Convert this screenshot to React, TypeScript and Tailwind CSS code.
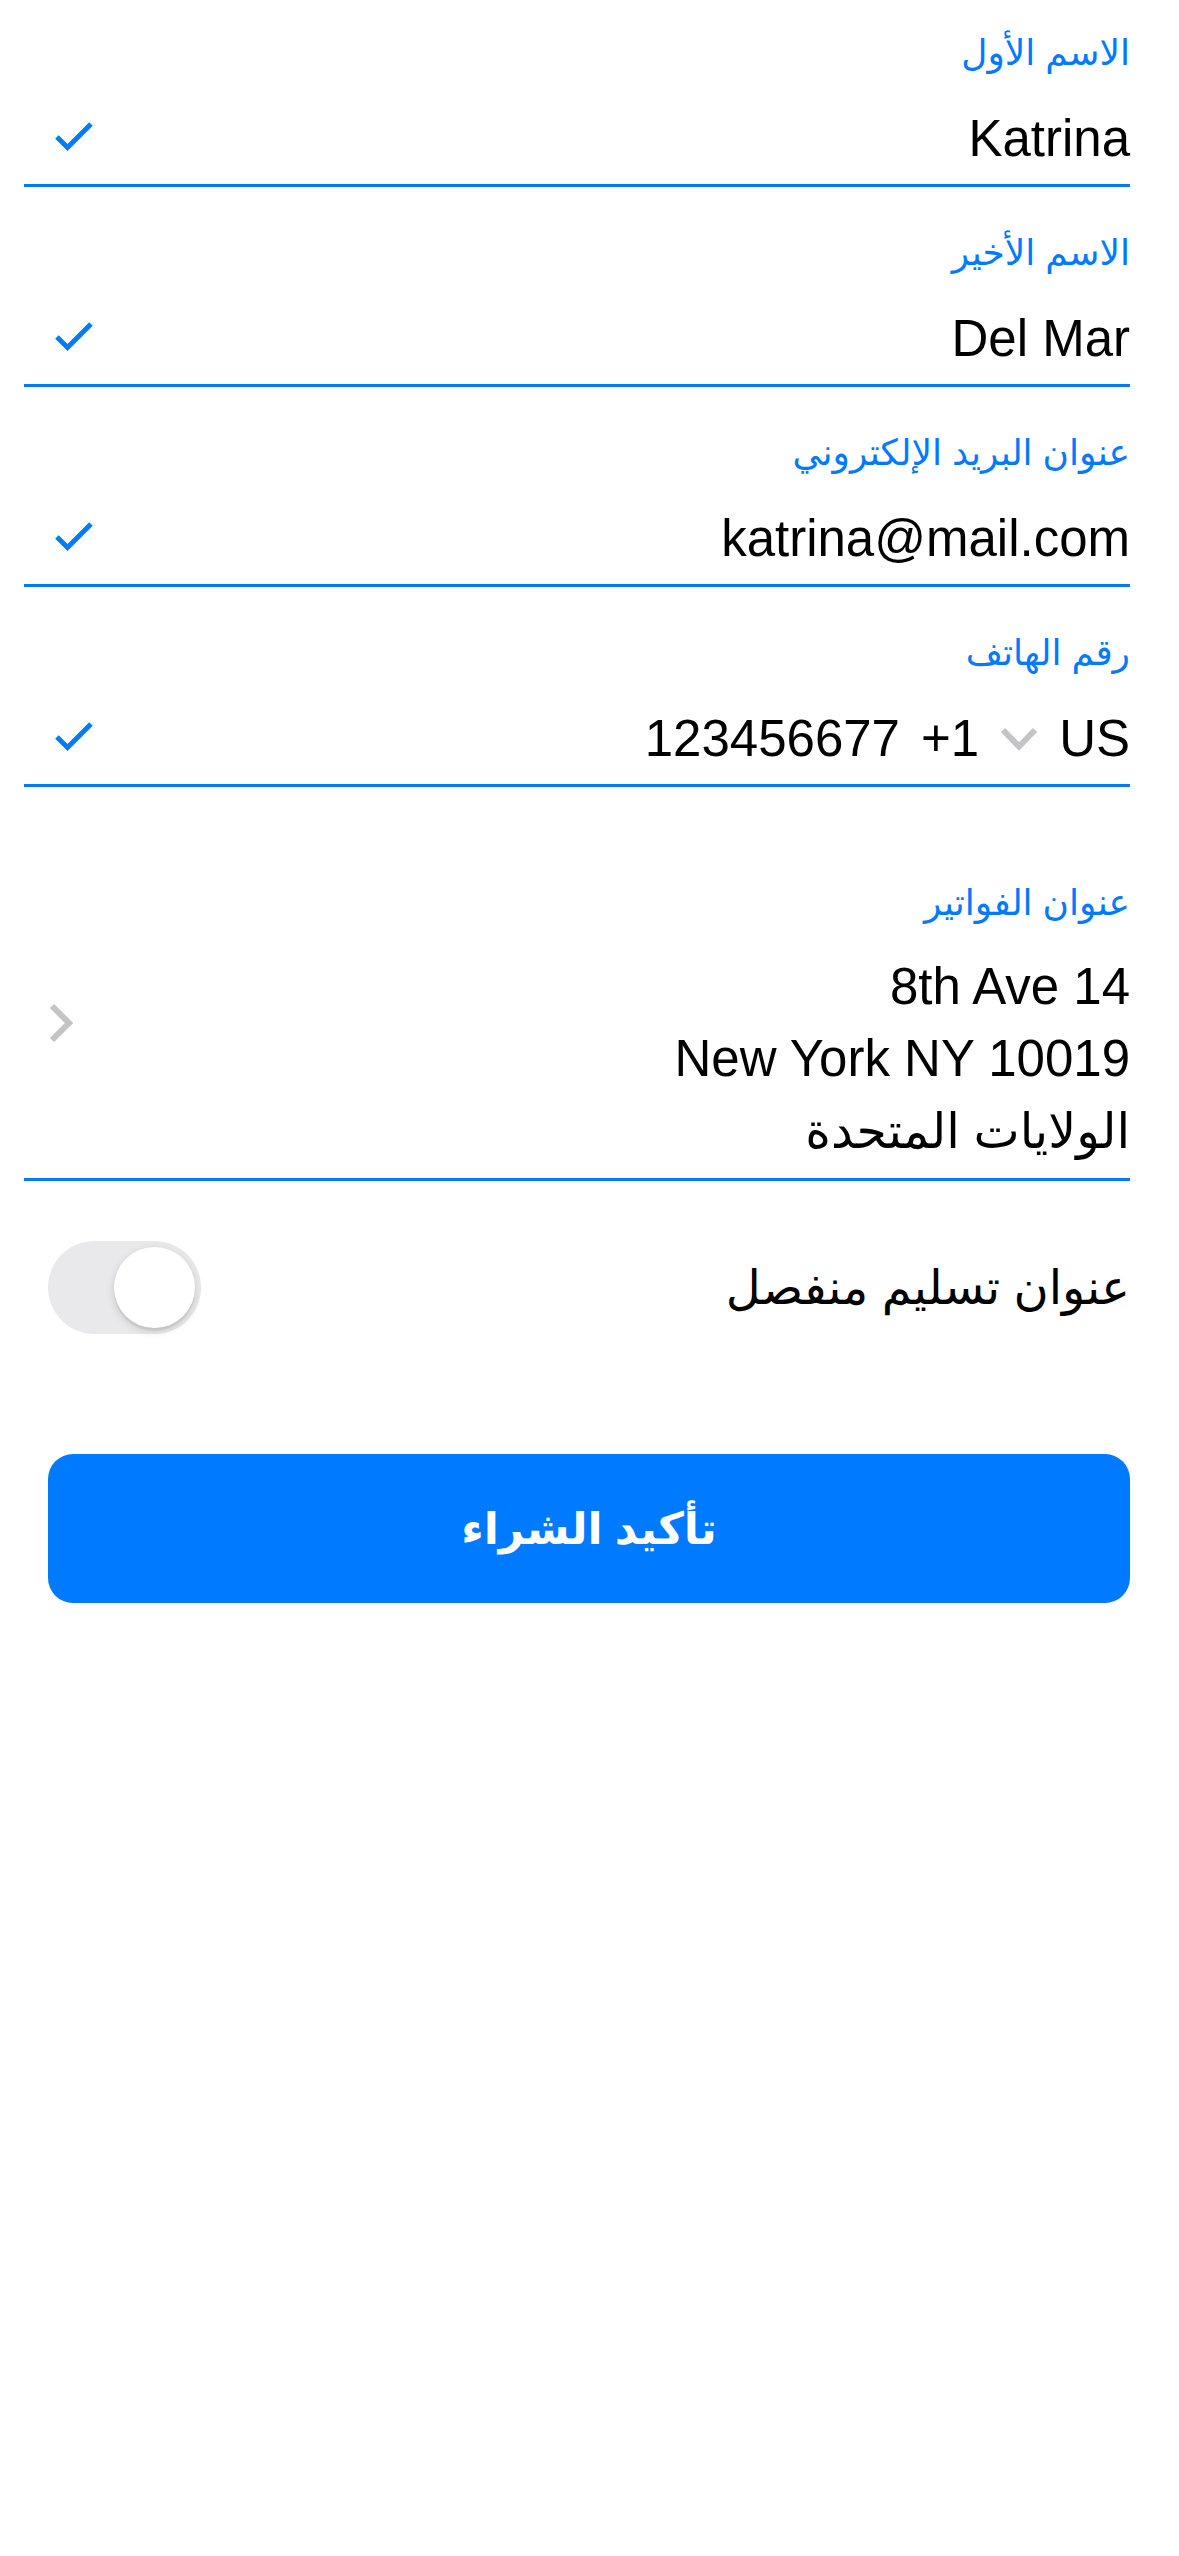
import React from 'react'

function Check() {
  return (
    <svg width="40" height="32" viewBox="0 0 40 32" fill="none">
      <path d="M3 16 L13.5 26.5 L37 3" stroke="#007aff" strokeWidth="5" />
    </svg>
  )
}

function ChevronDown() {
  return (
    <svg width="38" height="24" viewBox="0 0 38 24" fill="none">
      <path d="M3 3 L19 19.5 L35 3" stroke="#c4c4c6" strokeWidth="6" />
    </svg>
  )
}

function ChevronRight() {
  return (
    <svg width="26" height="40" viewBox="0 0 26 40" fill="none">
      <path d="M4 3 L21 20 L4 37" stroke="#c4c4c6" strokeWidth="6" />
    </svg>
  )
}

function Field({ label, children, first }: { label: string; children: React.ReactNode; first?: boolean }) {
  return (
    <div className={`${first ? 'pt-[29px]' : 'pt-[42px]'} pb-[15px] border-b-[3px] border-[#007aff]`}>
      <div className="text-[36px] leading-[48px] text-[#007aff]">{label}</div>
      <div className="mt-[32px] flex items-center justify-between h-[60px]">
        <div className="text-[51px] leading-[60px] text-black">{children}</div>
        <div className="pl-[30px] mb-[4px]">
          <Check />
        </div>
      </div>
    </div>
  )
}

export default function App() {
  return (
    <div
      dir="rtl"
      className="min-h-screen bg-white pl-[24px] pr-[49px]"
      style={{ fontFamily: '"Liberation Sans", "DejaVu Sans", sans-serif' }}
    >
      <Field label="الاسم الأول" first>
        <span dir="ltr">Katrina</span>
      </Field>
      <Field label="الاسم الأخير">
        <span dir="ltr">Del Mar</span>
      </Field>
      <Field label="عنوان البريد الإلكتروني">
        <span dir="ltr">katrina@mail.com</span>
      </Field>
      <Field label="رقم الهاتف">
        <div className="flex items-center gap-[21px]">
          <span dir="ltr">US</span>
          <ChevronDown />
          <span dir="ltr">+1</span>
          <span dir="ltr">123456677</span>
        </div>
      </Field>

      {/* billing address */}
      <div className="pt-[92px] pb-[11px] border-b-[3px] border-[#007aff] flex items-center justify-between">
        <div>
          <div className="text-[36px] leading-[48px] text-[#007aff]">عنوان الفواتير</div>
          <div className="mt-[24px] text-[51px] leading-[72px] text-black">
            <div>
              <span dir="ltr">8th Ave 14</span>
            </div>
            <div>
              <span dir="ltr">New York NY 10019</span>
            </div>
            <div className="text-[49px]">الولايات المتحدة</div>
          </div>
        </div>
        <div className="pl-[24px]">
          <ChevronRight />
        </div>
      </div>

      <div className="pt-[60px] flex items-center justify-between">
        <div className="text-[48px] leading-[60px] text-black">عنوان تسليم منفصل</div>
        <div className="ml-[24px] w-[153px] h-[93px] rounded-full bg-[#e9e9eb] p-[6px] flex justify-start">
          <div className="w-[81px] h-[81px] rounded-full bg-white shadow-[0_3px_8px_rgba(0,0,0,0.15),0_3px_1px_rgba(0,0,0,0.06)]" />
        </div>
      </div>

      <button className="mt-[120px] ml-[24px] w-[calc(100%-24px)] h-[149px] rounded-[25px] bg-[#007aff] text-white text-[44px] font-bold flex items-center justify-center">
        تأكيد الشراء
      </button>
    </div>
  )
}
